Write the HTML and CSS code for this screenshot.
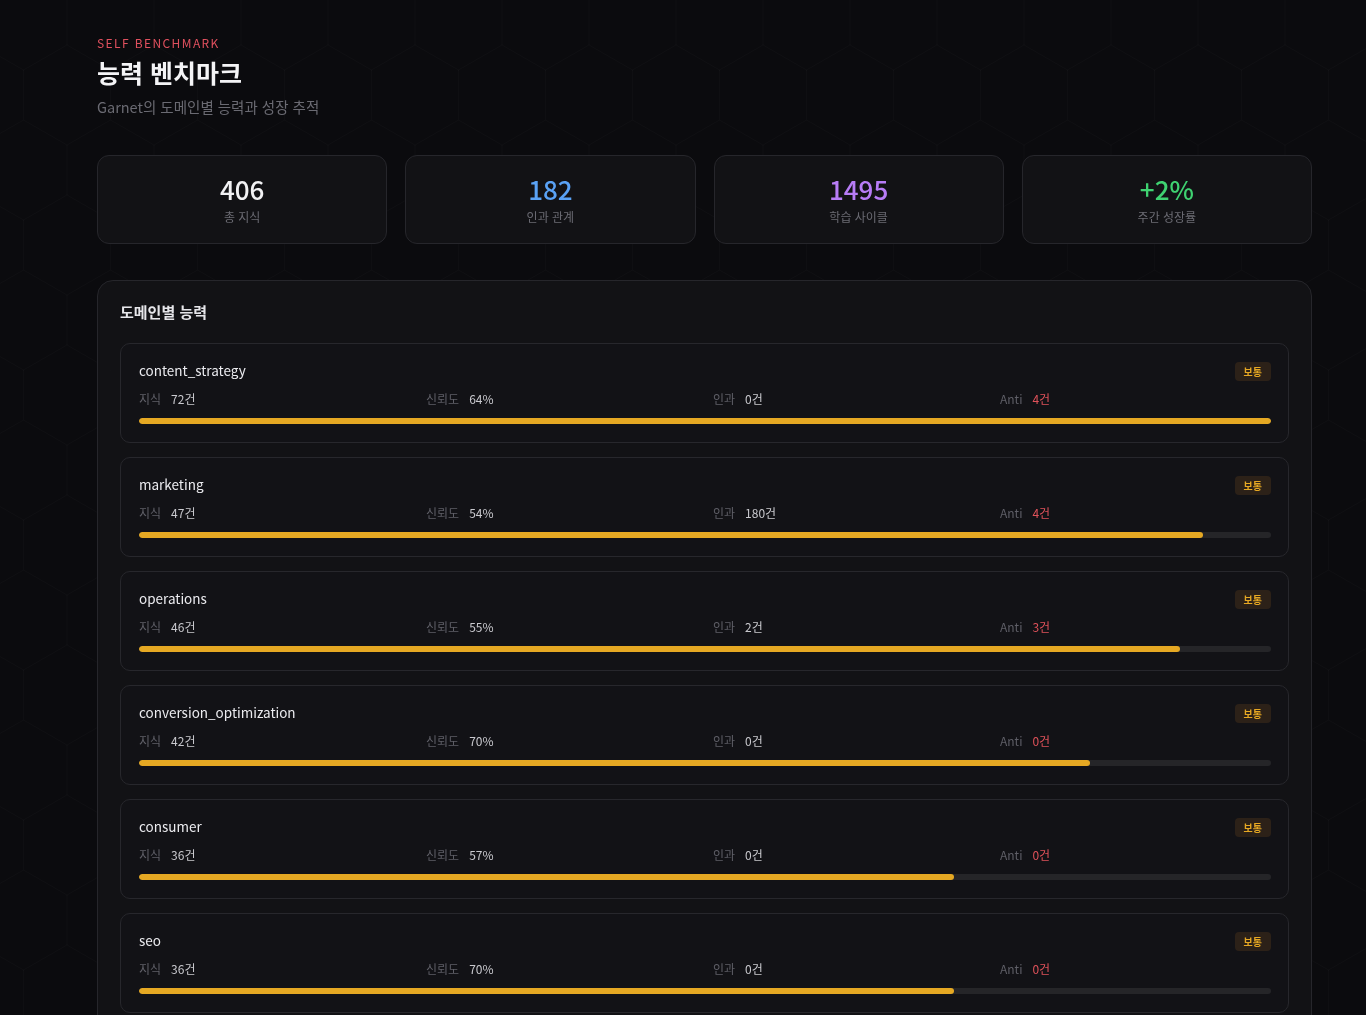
FILE: index.html
```html
<!DOCTYPE html>
<html lang="ko">
<head>
    <meta charset="UTF-8" />
    <meta name="viewport" content="width=device-width, initial-scale=1.0"/>
    <title>능력 벤치마크</title>
    <link rel="stylesheet" href="styles.css">
</head>
<body>
    <svg class="hex-bg" width="100%" height="100%" aria-hidden="true">
        <defs>
            <pattern id="hex" width="87" height="150" patternUnits="userSpaceOnUse" x="-20" y="-30">
                <path d="M43.5 0 L87 25 L87 75 L43.5 100 L0 75 L0 25 Z M43.5 100 V150" fill="none" stroke="rgba(255,255,255,0.018)" stroke-width="1"/>
            </pattern>
        </defs>
        <rect width="100%" height="100%" fill="url(#hex)"/>
    </svg>

    <div class="page">
        <div class="eyebrow">SELF BENCHMARK</div>
        <h1 class="title">능력 벤치마크</h1>
        <div class="subtitle">Garnet의 도메인별 능력과 성장 추적</div>

        <div class="stats">
            <div class="stat-card">
                <div class="stat-value">406</div>
                <div class="stat-label">총 지식</div>
            </div>
            <div class="stat-card">
                <div class="stat-value blue">182</div>
                <div class="stat-label">인과 관계</div>
            </div>
            <div class="stat-card">
                <div class="stat-value purple">1495</div>
                <div class="stat-label">학습 사이클</div>
            </div>
            <div class="stat-card">
                <div class="stat-value green">+2%</div>
                <div class="stat-label">주간 성장률</div>
            </div>
        </div>

        <div class="panel">
            <div class="panel-title">도메인별 능력</div>
            <div class="domain-list">
                <div class="domain">
                    <div class="domain-head">
                        <span class="domain-name">content_strategy</span>
                        <span class="badge">보통</span>
                    </div>
                    <div class="domain-stats">
                        <div><span class="k">지식</span><span class="v">72건</span></div>
                        <div><span class="k">신뢰도</span><span class="v">64%</span></div>
                        <div><span class="k">인과</span><span class="v">0건</span></div>
                        <div><span class="k">Anti</span><span class="v red">4건</span></div>
                    </div>
                    <div class="bar"><div class="fill" style="width:100%"></div></div>
                </div>
                <div class="domain">
                    <div class="domain-head">
                        <span class="domain-name">marketing</span>
                        <span class="badge">보통</span>
                    </div>
                    <div class="domain-stats">
                        <div><span class="k">지식</span><span class="v">47건</span></div>
                        <div><span class="k">신뢰도</span><span class="v">54%</span></div>
                        <div><span class="k">인과</span><span class="v">180건</span></div>
                        <div><span class="k">Anti</span><span class="v red">4건</span></div>
                    </div>
                    <div class="bar"><div class="fill" style="width:94%"></div></div>
                </div>
                <div class="domain">
                    <div class="domain-head">
                        <span class="domain-name">operations</span>
                        <span class="badge">보통</span>
                    </div>
                    <div class="domain-stats">
                        <div><span class="k">지식</span><span class="v">46건</span></div>
                        <div><span class="k">신뢰도</span><span class="v">55%</span></div>
                        <div><span class="k">인과</span><span class="v">2건</span></div>
                        <div><span class="k">Anti</span><span class="v red">3건</span></div>
                    </div>
                    <div class="bar"><div class="fill" style="width:92%"></div></div>
                </div>
                <div class="domain">
                    <div class="domain-head">
                        <span class="domain-name">conversion_optimization</span>
                        <span class="badge">보통</span>
                    </div>
                    <div class="domain-stats">
                        <div><span class="k">지식</span><span class="v">42건</span></div>
                        <div><span class="k">신뢰도</span><span class="v">70%</span></div>
                        <div><span class="k">인과</span><span class="v">0건</span></div>
                        <div><span class="k">Anti</span><span class="v red">0건</span></div>
                    </div>
                    <div class="bar"><div class="fill" style="width:84%"></div></div>
                </div>
                <div class="domain">
                    <div class="domain-head">
                        <span class="domain-name">consumer</span>
                        <span class="badge">보통</span>
                    </div>
                    <div class="domain-stats">
                        <div><span class="k">지식</span><span class="v">36건</span></div>
                        <div><span class="k">신뢰도</span><span class="v">57%</span></div>
                        <div><span class="k">인과</span><span class="v">0건</span></div>
                        <div><span class="k">Anti</span><span class="v red">0건</span></div>
                    </div>
                    <div class="bar"><div class="fill" style="width:72%"></div></div>
                </div>
                <div class="domain">
                    <div class="domain-head">
                        <span class="domain-name">seo</span>
                        <span class="badge">보통</span>
                    </div>
                    <div class="domain-stats">
                        <div><span class="k">지식</span><span class="v">36건</span></div>
                        <div><span class="k">신뢰도</span><span class="v">70%</span></div>
                        <div><span class="k">인과</span><span class="v">0건</span></div>
                        <div><span class="k">Anti</span><span class="v red">0건</span></div>
                    </div>
                    <div class="bar"><div class="fill" style="width:72%"></div></div>
                </div>
            </div>
        </div>
    </div>
</body>
</html>
```

FILE: styles.css
```css
body {
    font-family: 'Noto Sans CJK KR', 'Noto Sans', sans-serif;
    background: #0b0b0e;
    color: #e8e8ec;
    margin: 0;
    min-height: 100vh;
}
.hex-bg {
    position: fixed;
    top: 0;
    left: 0;
    z-index: 0;
    pointer-events: none;
}
.page {
    position: relative;
    z-index: 1;
    padding: 35px 54px 40px 97px;
}
.eyebrow {
    font-size: 12px;
    line-height: 16px;
    letter-spacing: 1.4px;
    color: #e0505e;
}
.title {
    margin: 2px 0 0 0;
    font-size: 25px;
    line-height: 38px;
    font-weight: 700;
    color: #f4f4f6;
}
.subtitle {
    margin-top: 6px;
    font-size: 14.5px;
    line-height: 20px;
    color: #6a6a72;
}
.stats {
    display: grid;
    grid-template-columns: repeat(4, 1fr);
    gap: 18px;
    margin-top: 38px;
}
.stat-card {
    background: rgba(19,19,22,0.95);
    border: 1px solid #26262b;
    border-radius: 12px;
    height: 89px;
    box-sizing: border-box;
    padding-top: 17px;
    text-align: center;
}
.stat-value {
    font-size: 26px;
    line-height: 32px;
    font-weight: 500;
    color: #f2f2f4;
}
.stat-value.blue { color: #5aa2f5; }
.stat-value.purple { color: #b77cf6; }
.stat-value.green { color: #3fd271; }
.stat-label {
    margin-top: 3px;
    font-size: 12px;
    line-height: 18px;
    color: #6b6b73;
}
.panel {
    margin-top: 36px;
    background: rgba(19,19,22,0.95);
    border: 1px solid #26262b;
    border-radius: 16px;
    padding: 20px 22px 22px 22px;
}
.panel-title {
    font-size: 15px;
    line-height: 22px;
    font-weight: 600;
    color: #e6e6ea;
}
.domain-list {
    margin-top: 20px;
    display: flex;
    flex-direction: column;
    gap: 14px;
}
.domain {
    border: 1px solid #27272c;
    border-radius: 10px;
    padding: 17px 17px 18px 18px;
    background: rgba(19,19,22,0.95);
}
.domain-head {
    display: flex;
    justify-content: space-between;
    align-items: flex-start;
    height: 18px;
}
.domain-name {
    font-size: 13.5px;
    line-height: 18px;
    color: #ececf0;
}
.badge {
    margin-top: 1px;
    background: #2c2118;
    color: #e6a823;
    font-size: 10px;
    font-weight: 700;
    line-height: 19px;
    padding: 0 9px;
    border-radius: 4px;
}
.domain-stats {
    display: grid;
    grid-template-columns: repeat(4, 1fr);
    gap: 16px;
    margin-top: 11px;
    font-size: 12px;
    line-height: 18px;
}
.domain-stats .k {
    color: #5f5f67;
    margin-right: 10px;
}
.domain-stats .v {
    color: #c9c9ce;
}
.domain-stats .v.red {
    color: #e0525a;
}
.bar {
    margin-top: 10px;
    height: 6px;
    border-radius: 3px;
    background: #252528;
    overflow: hidden;
}
.fill {
    height: 100%;
    border-radius: 3px;
    background: #e5a823;
}
```
